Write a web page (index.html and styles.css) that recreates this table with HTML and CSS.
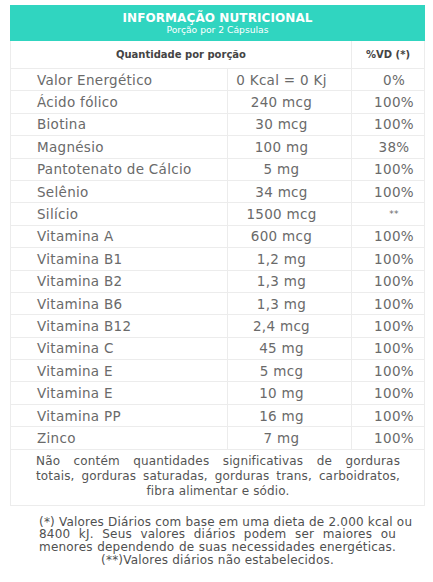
FILE: index.html
```html
<!DOCTYPE html>
<html lang="pt">
<head>
<meta charset="utf-8">
<link rel="stylesheet" href="styles.css">
</head>
<body>
<div class="page">
  <table class="nut">
    <colgroup>
      <col class="c1">
      <col class="c2">
      <col class="c3">
    </colgroup>
    <thead>
      <tr class="band">
        <th colspan="3">
          <div class="title">INFORMAÇÃO NUTRICIONAL</div>
          <div class="sub">Porção por 2 Cápsulas</div>
        </th>
      </tr>
      <tr class="head">
        <th colspan="2">Quantidade por porção</th>
        <th class="vdh">%VD (*)</th>
      </tr>
    </thead>
    <tbody>
      <tr><td class="n">Valor Energético</td><td class="q">0 Kcal = 0 Kj</td><td class="v">0%</td></tr>
      <tr><td class="n">Ácido fólico</td><td class="q">240 mcg</td><td class="v">100%</td></tr>
      <tr><td class="n">Biotina</td><td class="q">30 mcg</td><td class="v">100%</td></tr>
      <tr><td class="n">Magnésio</td><td class="q">100 mg</td><td class="v">38%</td></tr>
      <tr><td class="n">Pantotenato de Cálcio</td><td class="q">5 mg</td><td class="v">100%</td></tr>
      <tr><td class="n">Selênio</td><td class="q">34 mcg</td><td class="v">100%</td></tr>
      <tr><td class="n">Silício</td><td class="q">1500 mcg</td><td class="v"><span class="star">**</span></td></tr>
      <tr><td class="n">Vitamina A</td><td class="q">600 mcg</td><td class="v">100%</td></tr>
      <tr><td class="n">Vitamina B1</td><td class="q">1,2 mg</td><td class="v">100%</td></tr>
      <tr><td class="n">Vitamina B2</td><td class="q">1,3 mg</td><td class="v">100%</td></tr>
      <tr><td class="n">Vitamina B6</td><td class="q">1,3 mg</td><td class="v">100%</td></tr>
      <tr><td class="n">Vitamina B12</td><td class="q">2,4 mcg</td><td class="v">100%</td></tr>
      <tr><td class="n">Vitamina C</td><td class="q">45 mg</td><td class="v">100%</td></tr>
      <tr><td class="n">Vitamina E</td><td class="q">5 mcg</td><td class="v">100%</td></tr>
      <tr><td class="n">Vitamina E</td><td class="q">10 mg</td><td class="v">100%</td></tr>
      <tr><td class="n">Vitamina PP</td><td class="q">16 mg</td><td class="v">100%</td></tr>
      <tr><td class="n">Zinco</td><td class="q">7 mg</td><td class="v">100%</td></tr>
      <tr class="note"><td colspan="3">
        <p>
          <span class="l j">Não contém quantidades significativas de gorduras</span>
          <span class="l j">totais, gorduras saturadas, gorduras trans, carboidratos,</span>
          <span class="l">fibra alimentar e sódio.</span>
        </p>
      </td></tr>
    </tbody>
  </table>
  <p class="foot">
    <span class="l j">(*) Valores Diários com base em uma dieta de 2.000 kcal ou</span>
    <span class="l j">8400 kJ. Seus valores diários podem ser maiores ou</span>
    <span class="l j">menores dependendo de suas necessidades energéticas.</span>
    <span class="l">(**)Valores diários não estabelecidos.</span>
  </p>
</div>
</body>
</html>
```
FILE: styles.css
```css
html, body {
  margin: 0;
  padding: 0;
  background: #ffffff;
}
body {
  font-family: "DejaVu Sans", "Open Sans", sans-serif;
  color: #666666;
}
.page {
  padding: 5px 9px 0 10px;
}
.nut {
  width: 414px;
  border-collapse: collapse;
  table-layout: fixed;
}
.c1 { width: 217px; }
.c2 { width: 124px; }
.c3 { width: 73px; }
.nut td, .nut th {
  border: 1px solid #ececec;
  padding: 0;
}
.band th {
  background: #30d5c0;
  border-color: #30d5c0;
  color: #ffffff;
  height: 34px;
  text-align: center;
  vertical-align: middle;
}
.title {
  font-weight: bold;
  font-size: 12px;
  line-height: 14px;
  letter-spacing: 0.1px;
}
.sub {
  font-weight: normal;
  font-size: 9.2px;
  line-height: 10px;
}
.head th {
  height: 27px;
  font-size: 10px;
  font-weight: bold;
  color: #444444;
  text-align: center;
}
.nut tbody td {
  height: 21.4px;
  font-size: 13.5px;
  line-height: 16px;
  letter-spacing: 0.3px;
  color: #6a6a6a;
  white-space: nowrap;
}
.n {
  padding-left: 26px !important;
}
.q {
  text-align: center;
  padding-right: 16px !important;
}
.v {
  text-align: center;
  padding-left: 12px !important;
}
.star {
  font-size: 9px;
  vertical-align: 3px;
}
.nut tbody .note td {
  height: auto;
  padding: 4px 24px 6px 25px;
}
.note p {
  margin: 0;
  font-size: 12px;
  letter-spacing: 0.15px;
  line-height: 15px;
  color: #555555;
}
.l {
  display: block;
  text-align: center;
  white-space: nowrap;
}
.l.j {
  text-align: justify;
  text-align-last: justify;
}
.foot {
  margin: 10px 28px 0 29px;
  font-size: 12px;
  letter-spacing: 0.2px;
  line-height: 12.7px;
  color: #505050;
}
```
